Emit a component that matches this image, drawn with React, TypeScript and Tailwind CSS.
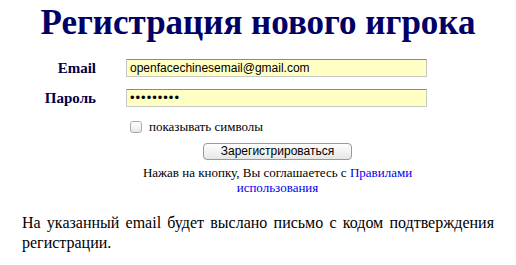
export default function App() {
  const serif = { fontFamily: '"Liberation Serif", "Times New Roman", serif' };
  const sans = { fontFamily: '"Liberation Sans", Arial, sans-serif' };

  return (
    <div className="h-[265px] w-[516px] bg-white" style={serif}>
      <h1 className="pt-[3px] text-center text-[35px] font-bold leading-[40px] text-[#000066]">
        Регистрация нового игрока
      </h1>

      <div className="mt-[16px] flex flex-col gap-[12px]">
        <div className="flex h-[18px] items-center">
          <label className="w-[96px] text-right text-[15px] font-bold leading-[18px] text-[#000044]">
            Email
          </label>
          <input
            type="text"
            defaultValue="openfacechinesemail@gmail.com"
            className="ml-[30px] h-[18px] w-[301px] border border-[#c8c8c8] border-t-[#8a8a8a] bg-[#ffffc4] px-[3px] text-[12px] text-black outline-none"
            style={sans}
          />
        </div>
        <div className="flex h-[18px] items-center">
          <label className="w-[96px] text-right text-[15px] font-bold leading-[18px] text-[#000044]">
            Пароль
          </label>
          <input
            type="password"
            defaultValue="123456789"
            className="ml-[30px] h-[18px] w-[301px] border border-[#c8c8c8] border-t-[#8a8a8a] bg-[#ffffc4] px-[3px] text-[13px] tracking-[1px] text-black outline-none"
            style={sans}
          />
        </div>
      </div>

      <div className="ml-[126px] w-[303px]">
        <label className="mt-[12px] ml-[4px] flex items-center gap-[7px] text-[13px] leading-[16px] text-black">
          <span className="inline-block h-[12px] w-[12px] rounded-[3px] border border-[#a9a9a9] bg-gradient-to-b from-white to-[#e8e8e8]" />
          показывать символы
        </label>

        <div className="mt-[8px] flex justify-center">
          <button
            className="h-[17px] w-[149px] rounded-[4px] border border-[#9a9a9a] bg-gradient-to-b from-white to-[#e6e6e6] text-[12px] leading-[15px] text-black"
            style={sans}
          >
            Зарегистрироваться
          </button>
        </div>

        <p className="mt-[5px] text-center text-[13px] leading-[15px] text-black">
          Нажав на кнопку, Вы соглашаетесь с{' '}
          <a href="#" className="text-[#0000ee]">
            Правилами использования
          </a>
        </p>
      </div>

      <p className="mx-[22px] mt-[18px] text-justify text-[16px] leading-[20px] text-black">
        На указанный email будет выслано письмо с кодом подтверждения регистрации.
      </p>
    </div>
  );
}
